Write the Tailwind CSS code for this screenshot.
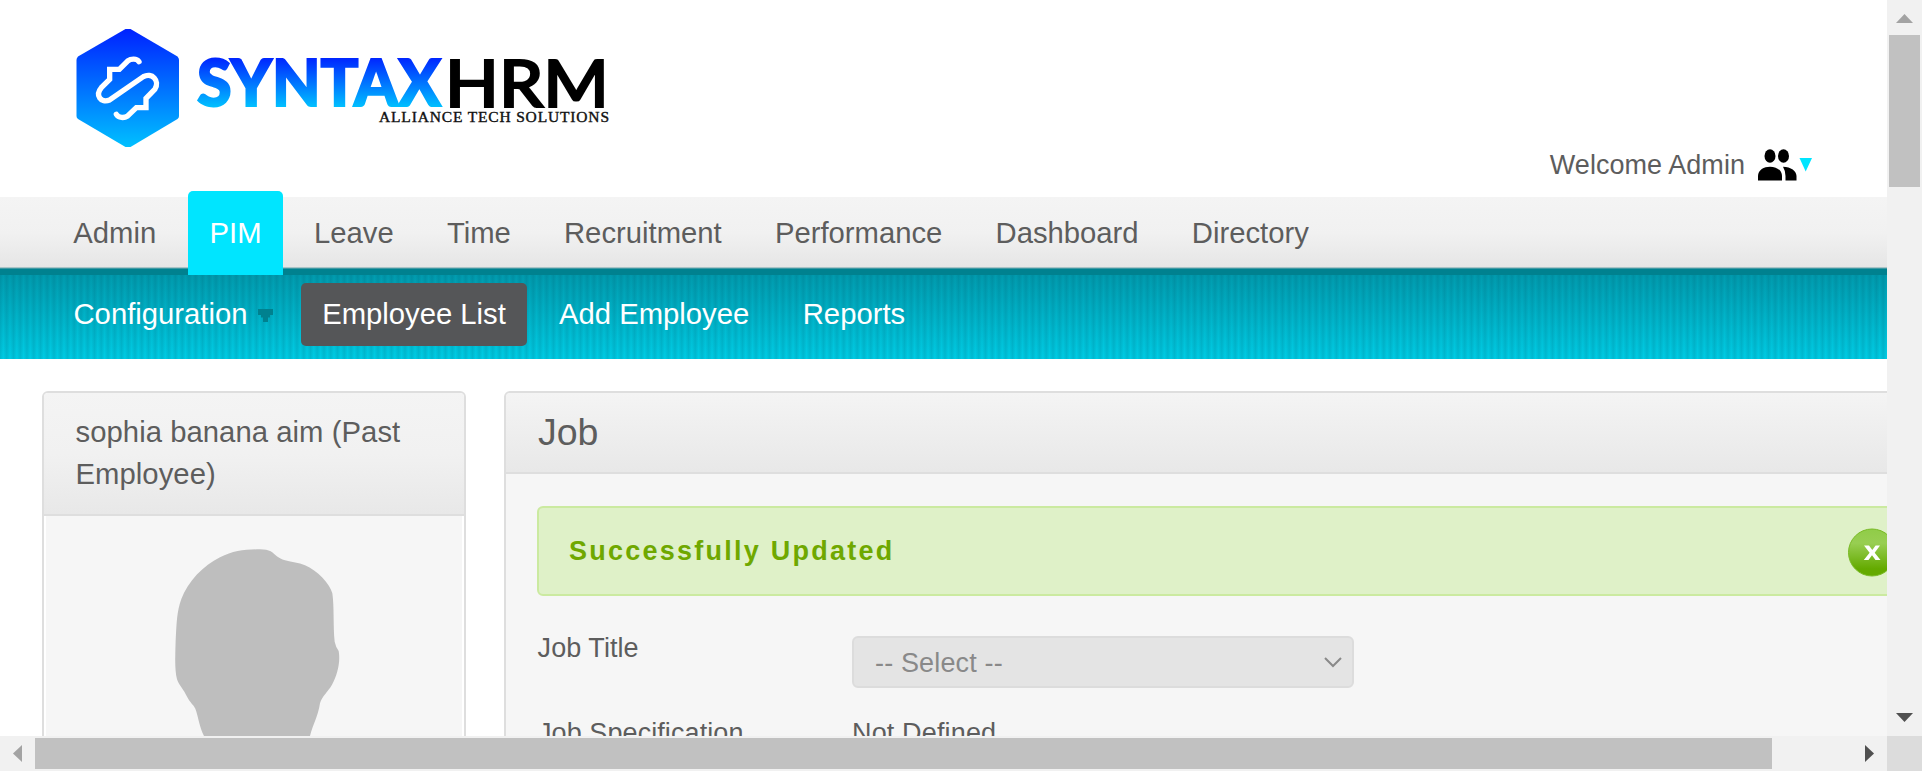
<!DOCTYPE html>
<html lang="en">
<head>
<meta charset="utf-8">
<title>SyntaxHRM</title>
<script src="https://cdn.jsdelivr.net/npm/@tailwindcss/browser@4"></script>
</head>
<body class="w-[1922px] h-[771px] overflow-hidden bg-white text-[#5d5d5d] font-['Liberation_Sans',Arial,sans-serif]">
<div class="grid grid-cols-[1887px_35px] grid-rows-[736px_35px] w-[1922px] h-[771px]">
  <main class="overflow-hidden min-w-0 min-h-0">
    <header class="h-[197px] flex justify-between pl-[60px] pr-[72px]">
      <svg width="570" height="160" viewBox="60 0 570 160" class="shrink-0">
        <defs>
          <linearGradient id="hex" x1="0" y1="29" x2="0" y2="147" gradientUnits="userSpaceOnUse"><stop offset="0" stop-color="#0022ff"/><stop offset="1" stop-color="#00c0ff"/></linearGradient>
          <linearGradient id="word" x1="0" y1="57" x2="0" y2="107" gradientUnits="userSpaceOnUse"><stop offset="0" stop-color="#0022ff"/><stop offset="1" stop-color="#00c0ff"/></linearGradient>
        </defs>
        <path d="M125.500 29H130.500L177.500 56.500Q179 58 179 60V116Q179 118 177.500 119L130.500 147H125.500L78 119Q76.500 118 76.500 116V60Q76.500 58 78 56.500Z" fill="url(#hex)"/>
        <path transform="translate(60 10) scale(.33333)" d="M237 155C230 145 213 146 203 153L178 178H149V208L124 233C105 255 122 281 149 270L250 200C276 186 300 212 285 237L258 265V293H229L203 318C192 325 176 324 169 313" fill="none" stroke="#fff" stroke-width="16" stroke-linecap="round"/>
        <text x="197" y="106" font-family="Lato" font-weight="900" font-size="65.500" fill="url(#word)" stroke="url(#word)" stroke-width="2" textLength="244" lengthAdjust="spacingAndGlyphs">SYNTAX</text>
        <text x="445" y="106.500" font-family="Lato" font-weight="500" font-size="65.500" fill="#000" stroke="#000" stroke-width="2.200" textLength="164" lengthAdjust="spacingAndGlyphs">HRM</text>
        <text x="379" y="122" font-family="Liberation Serif" font-size="15.500" fill="#111" stroke="#111" stroke-width=".4" textLength="230" lengthAdjust="spacing">ALLIANCE TECH SOLUTIONS</text>
      </svg>
      <div class="flex items-center mt-[143px] h-[42px] text-[27px]">
        <span class="pt-[2px] tracking-[0.050px]">Welcome Admin</span>
        <svg width="70" height="42" viewBox="1745 143 70 42" class="shrink-0">
          <g fill="#000"><ellipse cx="1770" cy="156" rx="5.500" ry="6.800"/><ellipse cx="1783.500" cy="156" rx="5.500" ry="6.800"/>
          <path d="M1758 180.500V176C1758 163.500 1782 163.500 1782 176V180.500Z"/><path d="M1783 166.800C1791 167 1796.500 171 1796.500 176V180.500H1785.500V176Q1785.500 171 1783 166.800Z"/></g>
          <path d="M1799.500 158H1812L1805.700 171.500Z" fill="#00e5ff"/>
        </svg>
      </div>
    </header>
    <nav class="h-[78px] border-b-[6px] border-[#00818f] shadow-[inset_0_-1px_0_#3f99a3,inset_0_-2px_0_#a9c4c7] bg-linear-to-b from-[#f4f4f4] via-[#f1f1f1] to-[#e5e5e5] flex items-start gap-[10.600px] pl-[52px] text-[29.250px] leading-[73px]">
      <a class="px-[21.300px]">Admin</a>
      <a class="relative z-10 -mt-[6px] h-[84px] w-[95px] text-center leading-[85px] rounded-t-[5px] bg-[#00e5ff] text-white">PIM</a>
      <a class="px-[21.300px] -ml-px">Leave</a>
      <a class="px-[21.300px]">Time</a>
      <a class="px-[21.300px]">Recruitment</a>
      <a class="px-[21.300px]">Performance</a>
      <a class="px-[21.300px]">Dashboard</a>
      <a class="px-[21.300px]">Directory</a>
    </nav>
    <nav class="h-[84px] flex items-start pt-[8px] pl-[73.500px] text-[29.250px] leading-[62px] text-white bg-[repeating-linear-gradient(90deg,rgba(0,60,80,0.13)_0px,rgba(0,60,80,0)_3.300px,rgba(0,60,80,0.13)_6.750px),linear-gradient(180deg,#009bae,#00cce4)]">
      <a>Configuration</a>
      <svg width="15" height="13" viewBox="0 0 15 13" class="ml-[10.500px] mt-[26px]"><path d="M0 0H15V6H12V8.500H10V13H5V8.500H3V6H0Z" fill="#00818f"/></svg>
      <a class="ml-[28px] w-[226px] h-[63px] text-center rounded-[5px] bg-[#555658]">Employee List</a>
      <a class="ml-[32px]">Add Employee</a>
      <a class="ml-[53.500px]">Reports</a>
    </nav>
    <div class="flex items-start gap-[38px] pt-[32px] pl-[42px] w-[2200px]">
      <aside class="w-[424px] h-[500px] border-2 border-[#dedede] rounded-[6px] overflow-hidden shrink-0">
        <h1 class="h-[123px] border-b-2 border-[#dedede] bg-linear-to-b from-[#f4f4f4] via-[#f1f1f1] to-[#e8e8e8] pl-[31.500px] pt-[18px] text-[29.250px] leading-[42px] tracking-[0.050px]">sophia banana aim (Past<br>Employee)</h1>
        <div class="mx-[2px] bg-[#f6f6f6] h-[400px]">
          <svg width="420" height="240" viewBox="42 408 1260 720" class="-ml-[2px]"><path d="M522 1068C508 1040 505 1010 496 986C490 974 480 968 472 952C461 928 446 914 441 898C433 866 436 820 437 780C440 730 440 695 454 657C474 604 520 557 570 532C610 512 645 508 690 508Q711 508 722 514C738 525 744 535 765 541C787 547 805 548 825 556C862 572 899 610 907 640C913 680 909 740 914 785Q917 800 926 813C932 845 922 885 906 914C893 937 876 948 870 970C864 1010 848 1035 840 1068L838 1128H540Z" fill="#bebebe"/></svg>
        </div>
      </aside>
      <section class="w-[1660px] h-[500px] border-2 border-[#dedede] rounded-[6px] bg-[#f6f6f6] overflow-hidden shrink-0">
        <h1 class="h-[81px] border-b-2 border-[#dedede] bg-linear-to-b from-[#f4f4f4] to-[#e8e8e8] pl-[32px] text-[37.500px] leading-[78px]">Job</h1>
        <div class="pl-[31px] pt-[32px]">
          <div class="w-[1370px] h-[90px] flex items-center justify-between border-2 border-[#cbeaa0] rounded-[6px] bg-[#dff1c8] pl-[30px] pr-[9px]">
            <span class="text-[27px] font-bold tracking-[2.250px] text-[#6fa800]">Successfully Updated</span>
            <svg width="50" height="50" viewBox="0 0 50 50" class="mt-[4px]">
              <defs><linearGradient id="cl" x1="0" y1="0" x2="0" y2="1"><stop offset="0" stop-color="#90cc48"/><stop offset=".3" stop-color="#98ce52"/><stop offset=".85" stop-color="#64aa00"/></linearGradient></defs>
              <circle cx="26" cy="24.500" r="23.500" fill="url(#cl)" stroke="#79ba25" stroke-width="1"/>
              <path d="M18 17.500H23L26.300 22L29.600 17.500H34L28.700 24.700L34.500 32H29.500L26 27.300L22.500 32H17.800L23.600 24.700Z" fill="#fff"/>
            </svg>
          </div>
          <div class="grid grid-cols-[315px_502px] text-[27px] mt-[40px]">
            <label class="leading-[24px] pl-[0.600px] tracking-[0.050px]">Job Title</label>
            <div class="h-[52px] w-[502px] border-2 border-[#dcdcdc] rounded-[6px] bg-[#e4e4e4] text-[#898989] flex items-center justify-between pl-[21px] pr-[10px]">
              <span class="pt-[2px] tracking-[0.150px]">-- Select --</span>
              <svg width="18" height="12" viewBox="0 0 18 12" fill="none" stroke="#898989" stroke-width="2"><path d="M1 2L9 10L17 2"/></svg>
            </div>
          </div>
          <div class="grid grid-cols-[315px_502px] text-[27px] leading-[40px] mt-[25px]">
            <span class="pl-px tracking-[0.080px]">Job Specification</span>
            <span class="tracking-[0.150px]">Not Defined</span>
          </div>
        </div>
      </section>
    </div>
  </main>
  <div class="bg-[#f1f1f1] flex flex-col items-center justify-between py-[14px]">
    <div class="flex flex-col items-center gap-[12px]">
      <svg width="17" height="9" viewBox="0 0 17 9"><path d="M8.500 0L17 9H0Z" fill="#a3a3a3"/></svg>
      <div class="w-[31px] h-[152px] bg-[#c1c1c1]"></div>
    </div>
    <svg width="17" height="9" viewBox="0 0 17 9"><path d="M0 0H17L8.500 9Z" fill="#505050"/></svg>
  </div>
  <div class="bg-[#f1f1f1] flex items-center justify-between px-[13px]">
    <div class="flex items-center gap-[13px]">
      <svg width="9" height="17" viewBox="0 0 9 17"><path d="M9 0V17L0 8.500Z" fill="#a3a3a3"/></svg>
      <div class="w-[1737px] h-[31px] bg-[#c1c1c1]"></div>
    </div>
    <svg width="9" height="17" viewBox="0 0 9 17"><path d="M0 0V17L9 8.500Z" fill="#505050"/></svg>
  </div>
  <div class="bg-[#dcdcdc]"></div>
</div>
</body>
</html>
